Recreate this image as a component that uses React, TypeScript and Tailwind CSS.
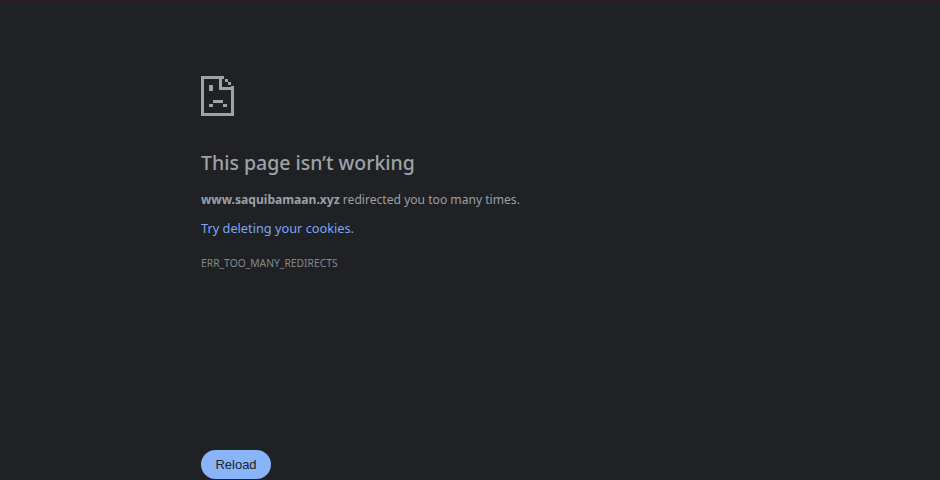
export default function App() {
  return (
    <div className="h-[480px] w-[940px] overflow-hidden bg-[#202124] font-['Noto_Sans','Open_Sans',sans-serif] text-[#9aa0a6]">
      <div className="h-px bg-[#2e1a2e]" />
      <main className="flex flex-col items-start pl-[201px] pt-[75px]">
        <svg width="34" height="40" viewBox="0 0 34 40" className="block" fill="#a0a3a6">
          <rect x="0" y="0" width="23" height="3" />
          <rect x="0" y="0" width="3" height="40" />
          <rect x="0" y="37" width="33" height="3" />
          <rect x="30" y="10" width="3" height="30" />
          <rect x="18" y="0" width="3" height="14" />
          <rect x="18" y="11" width="15" height="3" />
          <rect x="24" y="3" width="3" height="3" />
          <rect x="27" y="6" width="3" height="3" />
          <rect x="8" y="9" width="4" height="6" />
          <rect x="12" y="24" width="10" height="3" />
          <rect x="8" y="28" width="4" height="3" />
          <rect x="22" y="28" width="4" height="3" />
        </svg>
        <h1 className="mt-[32px] text-[19.5px] leading-[30px] font-medium text-[#9ea3a6]">This page isn’t working</h1>
        <p className="mt-[12px] text-[12.1px] leading-[20px]">
          <strong className="font-bold">www.saquibamaan.xyz</strong> redirected you too many times.
        </p>
        <p className="mt-[8px] text-[12.75px] leading-[20px]">
          <a className="text-[#7ba7f0]">Try deleting your cookies</a>.
        </p>
        <p className="mt-[18px] text-[10.3px] leading-[14px] text-[#83888c]">ERR_TOO_MANY_REDIRECTS</p>
        <button className="mt-[180px] h-[29px] w-[70px] shrink-0 rounded-full bg-[#8ab4f8] pt-px font-['Liberation_Sans',sans-serif] text-[13px] text-[#202124]">Reload</button>
      </main>
    </div>
  );
}
